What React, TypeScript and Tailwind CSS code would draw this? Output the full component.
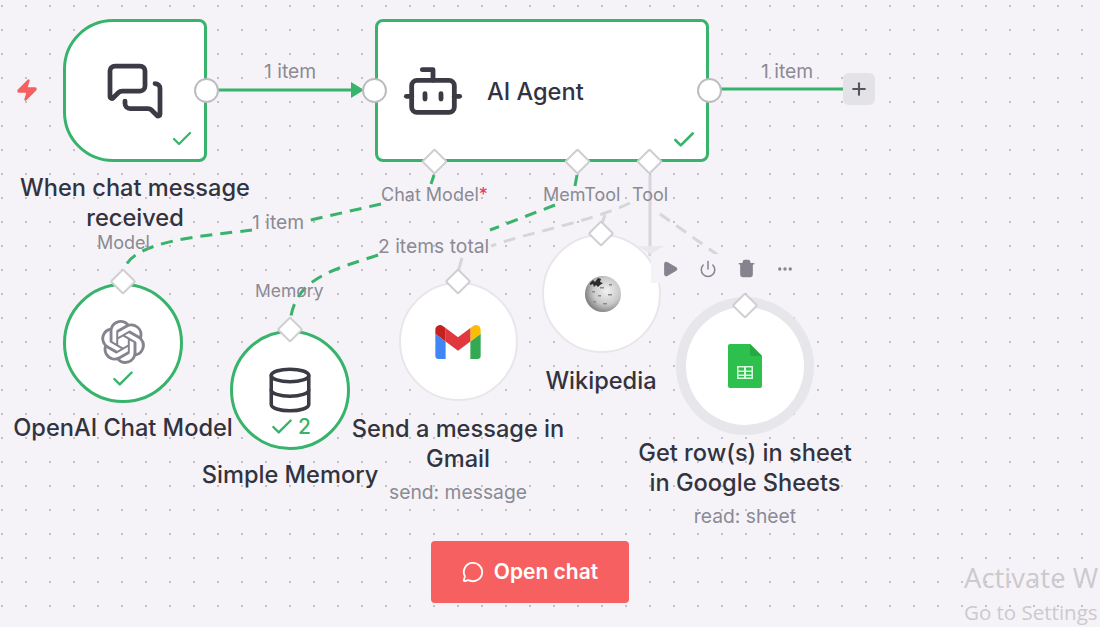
import React from "react";
import { Bot, Check, Database, Ellipsis, MessageCircle, MessagesSquare, Play, Plus, Power, Trash2, Zap } from "lucide-react";
import { SiOpenai } from "react-icons/si";

const GREEN = "#37b36b";
const GRAY = "#d6d5da";

function Port({ className }: { className: string }) {
  return <div className={`absolute h-[25px] w-[25px] rounded-full border-2 border-[#bdbcc2] bg-white ${className}`} />;
}

function Diamond({ className }: { className: string }) {
  return <div className={`absolute h-[19px] w-[19px] rotate-45 rounded-[2px] border-2 border-[#cfced3] bg-white ${className}`} />;
}

function TopDiamond({ className }: { className: string }) {
  return <Diamond className={`left-1/2 -translate-x-1/2 ${className}`} />;
}

function EdgeLabel({ className, children }: { className: string; children: React.ReactNode }) {
  return <div className={`absolute whitespace-nowrap leading-[22px] text-[#8b8a95] ${className}`}>{children}</div>;
}

function NodeTitle({ className, children }: { className?: string; children: React.ReactNode }) {
  return <div className={`text-center text-[23.6px] font-medium leading-[30px] text-[#33333f] ${className ?? ""}`}>{children}</div>;
}

function Edges() {
  return (
    <svg className="absolute inset-0 h-[627px] w-[1100px]" viewBox="0 0 1100 627" fill="none">
      <path d="M218 90H354" stroke={GREEN} strokeWidth="3" />
      <path d="M351 82l13 8-13 8z" fill={GREEN} />
      <path d="M721 89H845" stroke={GREEN} strokeWidth="3" />
      <g stroke={GRAY} strokeWidth="3" strokeDasharray="12 8">
        <path d="M630 203C590 222 530 232 491 246" />
        <path d="M462 258L458 272" />
        <path d="M605 215L601 226" />
        <path d="M660 214L722 258" />
      </g>
      <path d="M650 175V256" stroke={GRAY} strokeWidth="3" />
      <path d="M638 246H664L651 254z" fill="#e9e8ec" />
      <g stroke={GREEN} strokeWidth="3" strokeDasharray="12 8">
        <path d="M434 175L431 184" />
        <path d="M381 204L306 221" />
        <path d="M252 230C205 236 132 240 124 270" />
        <path d="M577 175L575 186" />
        <path d="M555 205L490 230" />
        <path d="M378 255C340 268 298 276 291 316" />
      </g>
    </svg>
  );
}

function WikipediaGlobe() {
  return (
    <svg className="ml-[3px] h-[38px] w-[38px]" viewBox="0 0 38 38">
      <defs>
        <radialGradient id="globe" cx="0.6" cy="0.42" r="0.62">
          <stop offset="0" stopColor="#f2f2f2" />
          <stop offset="0.6" stopColor="#c9c9c9" />
          <stop offset="1" stopColor="#7d7d7d" />
        </radialGradient>
      </defs>
      <circle cx="19" cy="19" r="18" fill="url(#globe)" />
      <path d="M6 8l3-3 2 2 3-4 3 1-1 3 3 1-3 2-2 2-2-2-2 2-1-3-3 1z" fill="#2b2b2b" />
      <g fill="#8a8a8a">
        <rect x="8" y="16" width="3" height="1.5" />
        <rect x="16" y="12" width="4" height="1.5" />
        <rect x="25" y="9" width="3" height="1.5" />
        <rect x="14" y="20" width="3" height="1.5" />
        <rect x="24" y="19" width="4" height="1.5" />
        <rect x="9" y="26" width="3" height="1.5" />
        <rect x="19" y="28" width="4" height="1.5" />
      </g>
    </svg>
  );
}

function GmailLogo() {
  return (
    <svg className="h-[34px] w-[46px]" viewBox="52 42 88 66">
      <path fill="#4285f4" d="M58 108h14V74L52 59v43c0 3.32 2.69 6 6 6" />
      <path fill="#34a853" d="M120 108h14c3.32 0 6-2.69 6-6V59l-20 15" />
      <path fill="#fbbc04" d="M120 48v26l20-15v-8c0-7.42-8.47-11.65-14.4-7.2" />
      <path fill="#e0383e" d="M72 74V48l24 18 24-18v26L96 92" />
      <path fill="#c5221f" d="M52 51v8l20 15V48l-5.6-4.2c-5.94-4.45-14.4-.22-14.4 7.2" />
    </svg>
  );
}

function SheetsLogo() {
  return (
    <svg className="h-[44px] w-[34px]" viewBox="0 0 34 44">
      <path d="M2 0H22L34 12V42a2 2 0 0 1-2 2H2a2 2 0 0 1-2-2V2a2 2 0 0 1 2-2z" fill="#2dc04d" />
      <path d="M22 0L34 12H24a2 2 0 0 1-2-2z" fill="#26a843" />
      <path d="M9 22H25V35H9zM10.5 23.5V26.5H16V23.5zM18 23.5V26.5H23.5V23.5zM10.5 28V30.5H16V28zM18 28V30.5H23.5V28zM10.5 32V33.5H16V32zM18 32V33.5H23.5V32z" fill="#d9f5df" fillRule="evenodd" />
    </svg>
  );
}

export default function App() {
  return (
    <div className="relative h-[627px] w-[1100px] overflow-hidden bg-[#f5f3f7] bg-[radial-gradient(#c2c1c7_0.8px,transparent_1px)] bg-[size:24px_24px] bg-[position:-10px_-6px] font-['Inter',sans-serif]">
      <Edges />

      <Zap className="absolute left-[15px] top-[78px] h-[24px] w-[24px]" fill="#f76060" stroke="#f76060" strokeWidth={1.5} />

      {/* trigger */}
      <div className="absolute left-[5px] top-[19px] flex w-[260px] flex-col items-center">
        <div className="relative flex h-[143px] w-[144px] items-center justify-center rounded-bl-[50px] rounded-br-[8px] rounded-tl-[50px] rounded-tr-[8px] border-[3px] border-[#37b36b] bg-white">
          <MessagesSquare className="h-[60px] w-[60px] text-[#3b3b45]" strokeWidth={1.9} />
          <Check className="absolute bottom-[8px] right-[10px] h-[24px] w-[24px] text-[#37b36b]" strokeWidth={2.2} />
          <Port className="left-[128px] top-[56px]" />
        </div>
        <NodeTitle className="mt-[11px]">When chat message received</NodeTitle>
      </div>

      {/* agent */}
      <div className="absolute left-[375px] top-[19px] flex h-[143px] w-[334px] items-center gap-[22px] rounded-[8px] border-[3px] border-[#37b36b] bg-white pl-[23px]">
        <Bot className="h-[64px] w-[64px] text-[#3b3b45]" strokeWidth={1.8} />
        <div className="mt-[2px] text-[23.6px] font-medium leading-[30px] text-[#33333f]">AI Agent</div>
        <Check className="absolute bottom-[6px] right-[9px] h-[26px] w-[26px] text-[#37b36b]" strokeWidth={2.4} />
        <Port className="left-[-16px] top-[56px]" />
        <Port className="left-[319px] top-[56px]" />
        <Diamond className="left-[47px] top-[130px]" />
        <Diamond className="left-[190px] top-[130px]" />
        <Diamond className="left-[262px] top-[130px]" />
      </div>

      <div className="absolute left-[843px] top-[73px] flex h-[32px] w-[32px] items-center justify-center rounded-[6px] bg-[#e3e2e7]">
        <Plus className="h-[20px] w-[20px] text-[#55555f]" strokeWidth={2.5} />
      </div>

      {/* openai */}
      <div className="absolute left-[3px] top-[283px] flex w-[240px] flex-col items-center">
        <div className="relative flex h-[120px] w-[120px] flex-col items-center rounded-full border-[3px] border-[#37b36b] bg-white pt-[34px]">
          <SiOpenai className="h-[44px] w-[44px] text-[#85848e]" />
          <Check className="mt-[2px] h-[26px] w-[26px] text-[#37b36b]" strokeWidth={2.2} />
          <TopDiamond className="top-[-14px]" />
        </div>
        <NodeTitle className="mt-[10px] whitespace-nowrap">OpenAI Chat Model</NodeTitle>
      </div>

      {/* memory */}
      <div className="absolute left-[170px] top-[330px] flex w-[240px] flex-col items-center">
        <div className="relative flex h-[120px] w-[120px] flex-col items-center rounded-full border-[3px] border-[#37b36b] bg-white pt-[32px]">
          <Database className="h-[50px] w-[50px] text-[#3b3b45]" strokeWidth={1.7} />
          <div className="mt-[-1px] flex items-center gap-[3px] text-[21px] font-medium leading-[26px] text-[#37b36b]">
            <Check className="h-[26px] w-[26px]" strokeWidth={2.2} />
            <span>2</span>
          </div>
          <TopDiamond className="top-[-13px]" />
        </div>
        <NodeTitle className="mt-[10px] whitespace-nowrap">Simple Memory</NodeTitle>
      </div>

      {/* gmail */}
      <div className="absolute left-[338px] top-[282px] flex w-[240px] flex-col items-center">
        <div className="relative flex h-[119px] w-[119px] items-center justify-center rounded-full border-2 border-[#e8e6ea] bg-white">
          <GmailLogo />
          <TopDiamond className="top-[-12px]" />
        </div>
        <NodeTitle className="mt-[13px]">Send a message in Gmail</NodeTitle>
        <div className="mt-[7px] text-[19.3px] leading-[22px] text-[#8b8a95]">send: message</div>
      </div>

      {/* wikipedia */}
      <div className="absolute left-[481px] top-[234px] flex w-[240px] flex-col items-center">
        <div className="relative flex h-[119px] w-[119px] items-center justify-center rounded-full border-2 border-[#e8e6ea] bg-white">
          <WikipediaGlobe />
          <TopDiamond className="top-[-12px]" />
        </div>
        <NodeTitle className="mt-[13px]">Wikipedia</NodeTitle>
      </div>

      {/* sheets, selected */}
      <div className="absolute left-[625px] top-[307px] flex w-[240px] flex-col items-center">
        <div className="relative flex h-[118px] w-[118px] items-center justify-center rounded-full bg-white ring-[10px] ring-[#e7e6ea]">
          <SheetsLogo />
          <TopDiamond className="top-[-11px]" />
        </div>
        <NodeTitle className="mt-[13px] w-[225px]">Get row(s) in sheet in Google Sheets</NodeTitle>
        <div className="mt-[7px] text-[19.3px] leading-[22px] text-[#8b8a95]">read: sheet</div>
      </div>

      {/* node toolbar */}
      <div className="absolute left-[651px] top-[254px] flex h-[29px] w-[155px] items-center gap-[20px] bg-[#f5f3f7] pl-[10px] text-[#85848e]">
        <Play className="h-[18px] w-[18px]" fill="#85848e" strokeWidth={1.5} />
        <Power className="h-[18px] w-[18px]" strokeWidth={2} />
        <Trash2 className="h-[19px] w-[19px]" fill="#85848e" strokeWidth={2} />
        <Ellipsis className="h-[18px] w-[18px]" strokeWidth={2.5} />
      </div>

      <EdgeLabel className="left-[264px] top-[60px] text-[19.3px]">1 item</EdgeLabel>
      <EdgeLabel className="left-[761px] top-[60px] text-[19.3px]">1 item</EdgeLabel>
      <EdgeLabel className="left-[252px] top-[211px] text-[19.3px]">1 item</EdgeLabel>
      <EdgeLabel className="left-[381px] top-[184px] text-[18px]">
        Chat Model<span className="text-[#e8345f]">*</span>
      </EdgeLabel>
      <EdgeLabel className="left-[543px] top-[184px] text-[18px]">MemTool</EdgeLabel>
      <EdgeLabel className="left-[632px] top-[184px] text-[18px]">Tool</EdgeLabel>
      <EdgeLabel className="left-[97px] top-[232px] text-[18px]">Model</EdgeLabel>
      <EdgeLabel className="left-[255px] top-[280px] text-[17.5px]">Memory</EdgeLabel>
      <EdgeLabel className="left-[378px] top-[235px] text-[19.3px]">2 items total</EdgeLabel>

      <button className="absolute left-[431px] top-[541px] flex h-[62px] w-[198px] items-center justify-center gap-[10px] rounded-[4px] bg-[#f76060] text-[21px] font-semibold text-white">
        <MessageCircle className="h-[22px] w-[22px]" strokeWidth={2} />
        Open chat
      </button>

      <div className="absolute left-[964px] top-[561px] whitespace-nowrap font-['Open_Sans',sans-serif] text-[27.5px] leading-[34px] text-[#cbcace]">Activate Windows</div>
      <div className="absolute left-[964px] top-[599px] whitespace-nowrap font-['Open_Sans',sans-serif] text-[20.5px] leading-[26px] text-[#cbcace]">Go to Settings to activate Windows.</div>
    </div>
  );
}
